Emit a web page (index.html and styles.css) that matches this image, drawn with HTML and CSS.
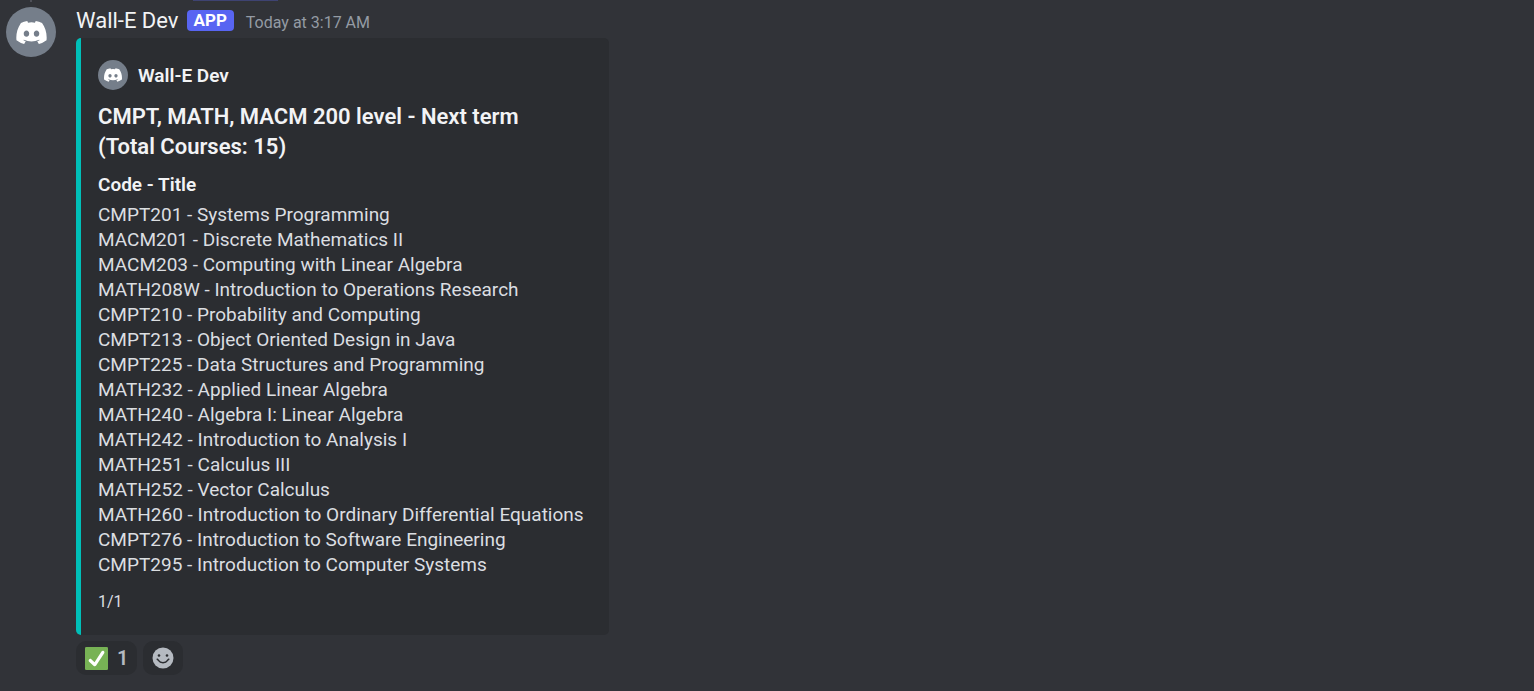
FILE: index.html
```html
<!DOCTYPE html>
<html lang="en">
<head>
<meta charset="utf-8">
<title>Wall-E Dev</title>
<link rel="stylesheet" href="styles.css">
</head>
<body>
<svg class="sprite" aria-hidden="true">
  <symbol id="bot" viewBox="0 0 127.14 96.36"><path fill="#fff" d="M107.7,8.07A105.15,105.15,0,0,0,81.47,0a72.06,72.06,0,0,0-3.36,6.83A97.68,97.68,0,0,0,49,6.83,72.37,72.37,0,0,0,45.64,0,105.89,105.89,0,0,0,19.39,8.09C2.79,32.65-1.71,56.6.54,80.21h0A105.73,105.73,0,0,0,32.71,96.36,77.7,77.7,0,0,0,39.6,85.25a68.42,68.42,0,0,1-10.85-5.18c.91-.66,1.8-1.34,2.66-2a75.57,75.57,0,0,0,64.32,0c.87.71,1.76,1.39,2.66,2a68.68,68.68,0,0,1-10.87,5.19,77,77,0,0,0,6.89,11.1A105.25,105.25,0,0,0,126.6,80.22h0C129.24,52.84,122.09,29.11,107.7,8.07ZM42.45,65.69C36.18,65.69,31,60,31,53s5-12.74,11.43-12.74S54,46,53.89,53,48.84,65.69,42.45,65.69Zm42.24,0C78.41,65.69,73.25,60,73.25,53s5-12.74,11.44-12.74S96.23,46,96.12,53,91.08,65.69,84.69,65.69Z"/></symbol>
</svg>
<span class="reply-spine"></span>
<span class="mention-edge"></span>
<main class="message">
  <div class="avatar"><svg class="avatar-logo"><use href="#bot"/></svg></div>
  <div class="content">
    <header class="header">
      <span class="username">Wall-E Dev</span>
      <span class="tag">APP</span>
      <time class="time">Today at 3:17 AM</time>
    </header>
    <article class="embed">
      <div class="author">
        <div class="author-icon"><svg class="author-logo"><use href="#bot"/></svg></div>
        <span>Wall-E Dev</span>
      </div>
      <h1 class="title">CMPT, MATH, MACM 200 level - Next term<br>(Total Courses: 15)</h1>
      <h2 class="field">Code - Title</h2>
      <ul class="courses">
        <li>CMPT201 - Systems Programming</li>
        <li>MACM201 - Discrete Mathematics II</li>
        <li>MACM203 - Computing with Linear Algebra</li>
        <li>MATH208W - Introduction to Operations Research</li>
        <li>CMPT210 - Probability and Computing</li>
        <li>CMPT213 - Object Oriented Design in Java</li>
        <li>CMPT225 - Data Structures and Programming</li>
        <li>MATH232 - Applied Linear Algebra</li>
        <li>MATH240 - Algebra I: Linear Algebra</li>
        <li>MATH242 - Introduction to Analysis I</li>
        <li>MATH251 - Calculus III</li>
        <li>MATH252 - Vector Calculus</li>
        <li>MATH260 - Introduction to Ordinary Differential Equations</li>
        <li>CMPT276 - Introduction to Software Engineering</li>
        <li>CMPT295 - Introduction to Computer Systems</li>
      </ul>
      <footer class="footer">1/1</footer>
    </article>
    <div class="reactions">
      <button class="reaction" type="button" aria-label="Check mark, 1 reaction">
        <svg class="check" viewBox="0 0 36 36"><rect width="36" height="36" rx="2" fill="#77b255"/><path fill="#fff" d="M29.28 6.36c-1.16-.75-2.71-.42-3.46.74L14.94 23.88l-5.03-4.65c-1.01-.94-2.6-.88-3.53.14-.94 1.01-.88 2.59.14 3.53l7.21 6.66c.48.45 1.09.67 1.69.67.67 0 1.48-.28 2.02-1.1L30.02 9.82c.75-1.16.42-2.71-.74-3.46z"/></svg>
        <span>1</span>
      </button>
      <button class="reaction" type="button" aria-label="Add reaction">
        <svg class="smile" viewBox="0 0 22 22"><circle cx="11" cy="11" r="10.5" fill="#b5bac1"/><circle cx="7" cy="8.500" r="1.300" fill="#2b2d31"/><circle cx="15" cy="8.500" r="1.300" fill="#2b2d31"/><path d="M5.200 12.200Q6 12.800 6.400 13.300C8.500 16.400 13.500 16.400 15.600 13.300Q16 12.800 16.800 12.200" fill="none" stroke="#2b2d31" stroke-width="1.500" stroke-linecap="round"/></svg>
      </button>
    </div>
  </div>
</main>
</body>
</html>
```
FILE: styles.css
```css
* { box-sizing: border-box; }
body {
  margin: 0;
  min-height: 100vh;
  background: #313338;
  color: #dbdee1;
  font-family: Roboto, "Noto Sans", sans-serif;
  font-size: 19px;
  line-height: 25px;
}
.sprite { position: absolute; width: 0; height: 0; }
.reply-spine { position: absolute; top: 0; left: 30px; width: 2px; height: 2px; background: #4e5058; }
.mention-edge { position: absolute; top: 0; left: 193px; width: 85px; height: 1px; background: #3e4372; }
.message { display: flex; align-items: flex-start; gap: 20px; padding: 7px 6px; }
.avatar, .author-icon {
  display: grid;
  place-items: center;
  flex: none;
  border-radius: 50%;
  background: #757e8a;
}
.avatar { width: 50px; height: 50px; }
.avatar-logo { width: 31px; height: 23px; }
.content { flex: 1; min-width: 0; }
.header { display: flex; align-items: center; height: 27px; margin-bottom: 4px; }
.username { color: #f2f3f5; font-size: 22px; }
.tag {
  margin: 0 12px 0 8px;
  padding: 0 7px;
  border-radius: 4px;
  background: #5865f2;
  color: #fff;
  font-size: 17px;
  font-weight: 700;
  line-height: 21px;
}
.time { color: #949ba4; font-size: 16px; padding-top: 3px; }
.embed {
  max-width: 533px;
  padding: 22px 17px 21px;
  border-left: 5px solid #00bfb8;
  border-radius: 5px;
  background: #2b2d31;
}
.author { display: flex; align-items: center; gap: 10px; color: #f2f3f5; font-size: 19px; font-weight: 600; }
.author-icon { width: 30px; height: 30px; }
.author-logo { width: 18px; height: 14px; }
.title { margin: 12px 0 10px; color: #f2f3f5; font-size: 22px; font-weight: 600; line-height: 30px; }
.field { margin: 0 0 5px; color: #f2f3f5; font-size: 19px; font-weight: 600; }
.courses { margin: 0; padding: 0; list-style: none; }
.footer { margin-top: 12px; font-size: 16px; }
.reactions { display: flex; gap: 6px; margin-top: 6px; }
.reaction {
  display: flex;
  align-items: center;
  gap: 9px;
  height: 34px;
  padding: 0 9px;
  border: 0;
  border-radius: 10px;
  background: #2b2d31;
  color: #b5bac1;
  font: 600 20px Roboto, sans-serif;
}
.check { width: 23px; height: 23px; }
.smile { width: 22px; height: 22px; }
```
